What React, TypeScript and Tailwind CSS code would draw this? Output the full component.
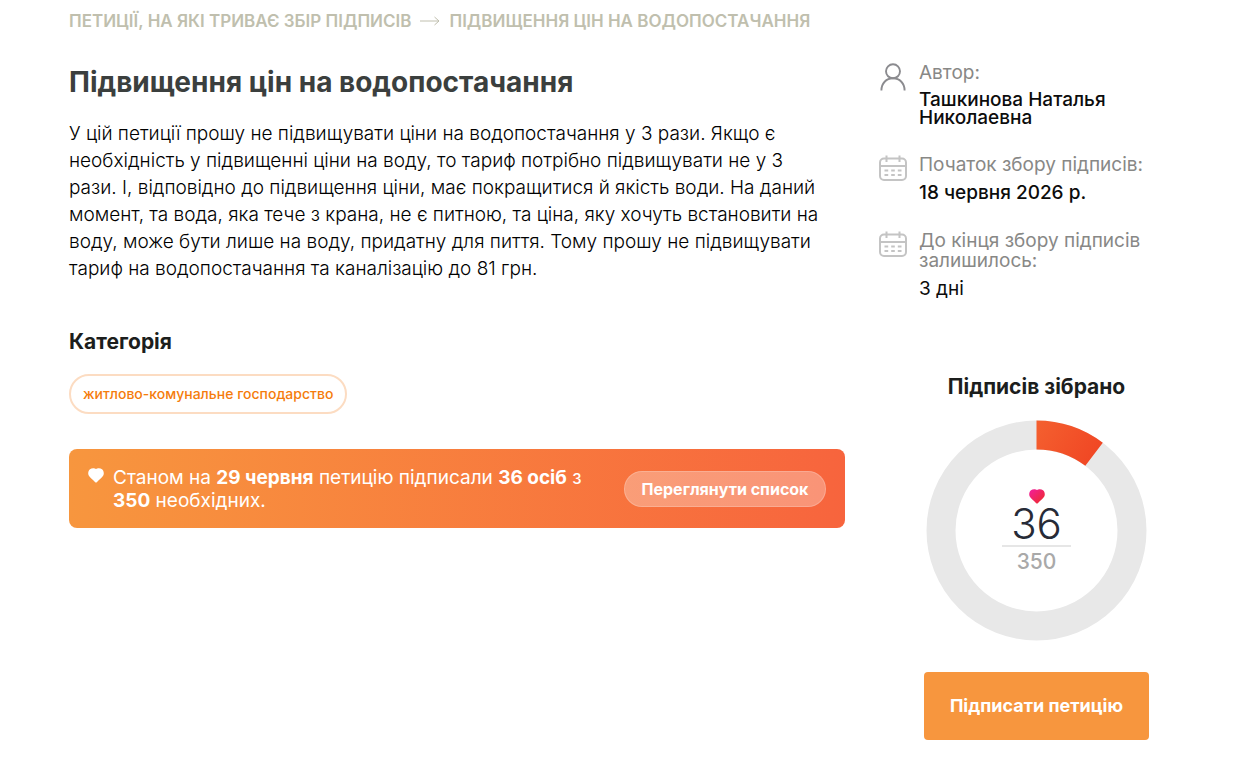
import React from 'react';

interface InfoRowProps {
  icon: React.ReactNode;
  label: string;
  children: React.ReactNode;
}

function UserIcon() {
  return (
    <svg width="28" height="28" viewBox="0 0 28 28" fill="none" stroke="#8b8b8f" strokeWidth="1.9" aria-hidden="true">
      <circle cx="14" cy="8.3" r="7" />
      <path d="M2.4 27.5C2.4 20.5 7.2 15.3 14 15.3S25.6 20.5 25.6 27.5" />
    </svg>
  );
}

function CalendarIcon() {
  return (
    <svg width="28" height="28" viewBox="0 0 28 28" fill="none" stroke="#c4c4c4" strokeWidth="2" aria-hidden="true">
      <rect x="1" y="3.5" width="26" height="21.5" rx="4" />
      <path d="M1 11H27M7.5 0.5V7M20.5 0.5V7" />
      <path d="M5.5 15.5H9.2M12.2 15.5H15.8M18.8 15.5H22.5M5.5 20H9.2M12.2 20H15.8M18.8 20H22.5" />
    </svg>
  );
}

function HeartIcon({ fill }: { fill: string }) {
  return (
    <svg width="16" height="15" viewBox="0 0 16 15" aria-hidden="true">
      <defs>
        <linearGradient id="heart" x1="0" y1="0" x2="1" y2="1">
          <stop offset="0.1" stopColor="#f21f92" />
          <stop offset="0.9" stopColor="#ee2b2f" />
        </linearGradient>
      </defs>
      <path
        fill={fill}
        d="M8 1C6.8.2 3.6 0 2 1.2.2 2.6-.2 5.4.6 7.2 1.4 8.8 4.8 11.8 7.2 14.2Q8 14.9 8.8 14.2C11.2 11.8 14.6 8.8 15.4 7.2 16.2 5.4 15.8 2.6 14 1.2 12.4 0 9.2.2 8 1Z"
      />
    </svg>
  );
}

function InfoRow({ icon, label, children }: InfoRowProps) {
  return (
    <div className="flex gap-3">
      <div className="w-7 shrink-0 pt-px">{icon}</div>
      <dl className="min-w-0 flex-1 pt-px">
        <dt className="leading-5 text-[#888886]">{label}</dt>
        {children}
      </dl>
    </div>
  );
}

// Кільцева діаграма зібраних підписів
function SignatureChart({ signed, needed }: { signed: number; needed: number }) {
  const radius = 95.5;
  const length = 2 * Math.PI * radius;

  return (
    <div className="relative mx-auto size-[221px]">
      <svg className="size-full" viewBox="0 0 221 221" fill="none" strokeWidth="29" aria-hidden="true">
        <defs>
          <linearGradient id="progress" gradientUnits="userSpaceOnUse" x1="111" y1="0" x2="177" y2="40">
            <stop offset="0" stopColor="#f4602f" />
            <stop offset="1" stopColor="#f04423" />
          </linearGradient>
        </defs>
        <circle cx="110.5" cy="110.5" r={radius} stroke="#e8e8e8" />
        <path
          d="M110.5 15A95.5 95.5 0 0 1 110.5 206"
          stroke="url(#progress)"
          strokeDasharray={`${(length * signed) / needed} ${length}`}
        />
      </svg>
      <div className="absolute inset-0 flex flex-col items-center pt-[69px]">
        <HeartIcon fill="url(#heart)" />
        <span className="text-[42px] leading-10 font-light text-[#272b37]">{signed}</span>
        <span className="mt-px w-[69px] border-t-2 border-[#e6e6e6] pt-[3px] text-center text-[21px] leading-6 font-medium text-[#a9a9a9]">{needed}</span>
      </div>
    </div>
  );
}

export default function App() {
  return (
    <div className="bg-white px-[69px] pt-[11px] pb-7 font-['Inter','Noto_Sans',sans-serif] text-[#1c1e1d]">
      <nav className="flex items-center gap-2 text-[17px] leading-5 font-semibold text-[#c0bfae] uppercase">
        <a href="#petitions">Петиції, на які триває збір підписів</a>
        <svg width="22" height="10" viewBox="0 0 22 10" fill="none" stroke="currentColor" aria-hidden="true">
          <path d="M1 5H20M15.5 1L20 5L15.5 9" />
        </svg>
        <span>Підвищення цін на водопостачання</span>
      </nav>

      <div className="mt-[31px] flex items-start gap-[34px]">
        <main className="min-w-0 flex-1">
          <h1 className="text-[28px] leading-10 font-bold text-[#3b3f3e]">Підвищення цін на водопостачання</h1>
          <p className="mt-[18px] pr-6 text-[19px] leading-[27px] font-light text-black">
            У цій петиції прошу не підвищувати ціни на водопостачання у 3 рази. Якщо є необхідність у підвищенні ціни
            на воду, то тариф потрібно підвищувати не у 3 рази. І, відповідно до підвищення ціни, має покращитися й
            якість води. На даний момент, та вода, яка тече з крана, не є питною, та ціна, яку хочуть встановити на
            воду, може бути лише на воду, придатну для пиття. Тому прошу не підвищувати тариф на водопостачання та
            каналізацію до 81 грн.
          </p>

          <h2 className="mt-12 text-[21px] leading-6 font-bold">Категорія</h2>
          <a
            href="#category"
            className="mt-5 inline-flex h-10 items-center rounded-full border-2 border-[#fcdcc2] px-3 text-sm font-medium text-[#f57c0c]"
          >
            житлово-комунальне господарство
          </a>

          <section className="mt-[35px] flex items-center gap-8 rounded-lg bg-linear-to-r from-[#f7963e] to-[#f7643d] px-[19px] pt-[17px] pb-4 text-white">
            <div className="flex flex-1 gap-[9px]">
              <div className="shrink-0 pt-[2px]">
                <HeartIcon fill="#ffffff" />
              </div>
              <p className="text-[19px] leading-[23px]">
                Станом на <b>29 червня</b> петицію підписали <b>36 осіб</b> з <b>350</b> необхідних.
              </p>
            </div>
            <button
              type="button"
              className="h-9 w-[202px] shrink-0 rounded-full border border-white/20 bg-white/30 text-base font-bold"
            >
              Переглянути список
            </button>
          </section>
        </main>

        <aside className="w-[302px] shrink-0">
          <div className="flex flex-col gap-[27px] text-[19px] text-[#0c0c0c]">
            <InfoRow icon={<UserIcon />} label="Автор:">
              <dd className="mt-2 pr-16 leading-[18px] font-medium">Ташкинова Наталья Николаевна</dd>
            </InfoRow>
            <InfoRow icon={<CalendarIcon />} label="Початок збору підписів:">
              <dd className="mt-2 leading-5 font-medium">18 червня 2026 р.</dd>
            </InfoRow>
            <InfoRow icon={<CalendarIcon />} label="До кінця збору підписів залишилось:">
              <dd className="mt-2 leading-5">3 дні</dd>
            </InfoRow>
          </div>

          <section className="mt-[76px] ml-[45px] w-[225px]">
            <h2 className="text-center text-[21px] leading-6 font-bold">Підписів зібрано</h2>
            <div className="mt-[21px]">
              <SignatureChart signed={36} needed={350} />
            </div>
            <button
              type="button"
              className="mt-[31px] h-[68px] w-full rounded bg-[#f7963e] text-lg font-bold text-white"
            >
              Підписати петицію
            </button>
          </section>
        </aside>
      </div>
    </div>
  );
}
